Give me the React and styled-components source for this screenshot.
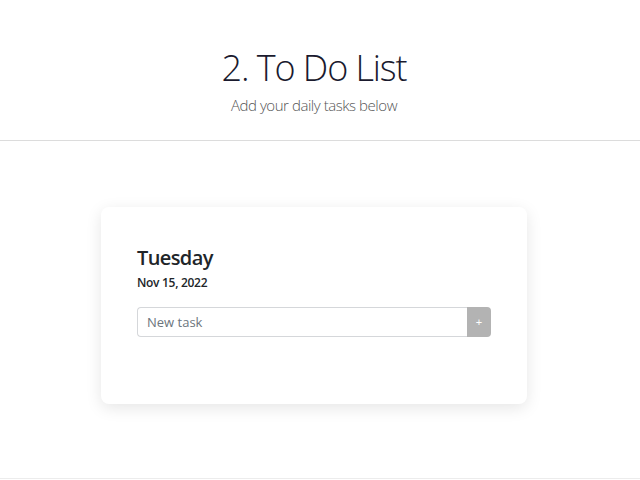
import React, { useState } from "react";
import styled, { createGlobalStyle } from "styled-components";

const GlobalStyle = createGlobalStyle`
  body {
    margin: 0;
    background: #ffffff;
    font-family: "Open Sans", "Noto Sans", sans-serif;
    color: #212529;
  }
`;

export default function App() {
  const [task, setTask] = useState("");
  return (
    <>
      <GlobalStyle />
      <Header>
        <Title>2. To Do List</Title>
        <Subtitle>Add your daily tasks below</Subtitle>
      </Header>
      <Main>
        <Card>
          <Day>Tuesday</Day>
          <DateText>Nov 15, 2022</DateText>
          <InputGroup>
            <TaskInput
              placeholder="New task"
              value={task}
              onChange={(e) => setTask(e.target.value)}
            />
            <AddBtn>+</AddBtn>
          </InputGroup>
        </Card>
      </Main>
      <Footer />
    </>
  );
}

//styled Components
const Header = styled.header`
  display: flex;
  flex-direction: column;
  align-items: center;
  padding: 46px 12px 25px 0;
  border-bottom: 1px solid #dcdcdc;
  height: 69px;
`;
const Title = styled.h1`
  margin: 0;
  font-size: 36px;
  font-weight: 300;
  line-height: 43px;
  letter-spacing: -1.1px;
  color: #1a1a2e;
`;
const Subtitle = styled.p`
  margin: 6px 0 0;
  font-size: 15px;
  font-weight: 300;
  line-height: 20px;
  letter-spacing: -0.45px;
  color: #555;
`;
const Main = styled.main`
  display: flex;
  justify-content: center;
  padding: 66px 12px 74px 0;
  border-bottom: 1px solid #ececec;
`;
const Card = styled.div`
  width: 354px;
  height: 159px;
  padding: 38px 36px 0;
  background: #fff;
  border-radius: 8px;
  box-shadow: 0 4px 16px rgba(0, 0, 0, 0.1);
`;
const Day = styled.h2`
  margin: 0;
  font-size: 20px;
  font-weight: 600;
  line-height: 25px;
  letter-spacing: -0.6px;
  color: #212529;
`;
const DateText = styled.div`
  margin-top: 5px;
  font-size: 12px;
  font-weight: 600;
  line-height: 16px;
  letter-spacing: -0.3px;
  color: #212529;
`;
const InputGroup = styled.div`
  display: flex;
  margin-top: 16px;
  height: 30px;
`;
const TaskInput = styled.input`
  flex: 1;
  min-width: 0;
  height: 30px;
  box-sizing: border-box;
  border: 1px solid #d5d7da;
  border-right: none;
  border-radius: 4px 0 0 4px;
  padding: 0 9px;
  font-family: "Open Sans", "Noto Sans", sans-serif;
  font-size: 13px;
  color: #495057;
  &::placeholder {
    color: #6c757d;
  }
  &:focus {
    outline: none;
  }
`;
const AddBtn = styled.button`
  width: 24px;
  height: 30px;
  border: none;
  border-radius: 0 4px 4px 0;
  background: #b3b3b3;
  color: #fff;
  font-size: 11px;
  padding: 0;
  cursor: pointer;
  &:focus {
    outline: none;
  }
`;
const Footer = styled.footer`
  height: 1px;
`;
